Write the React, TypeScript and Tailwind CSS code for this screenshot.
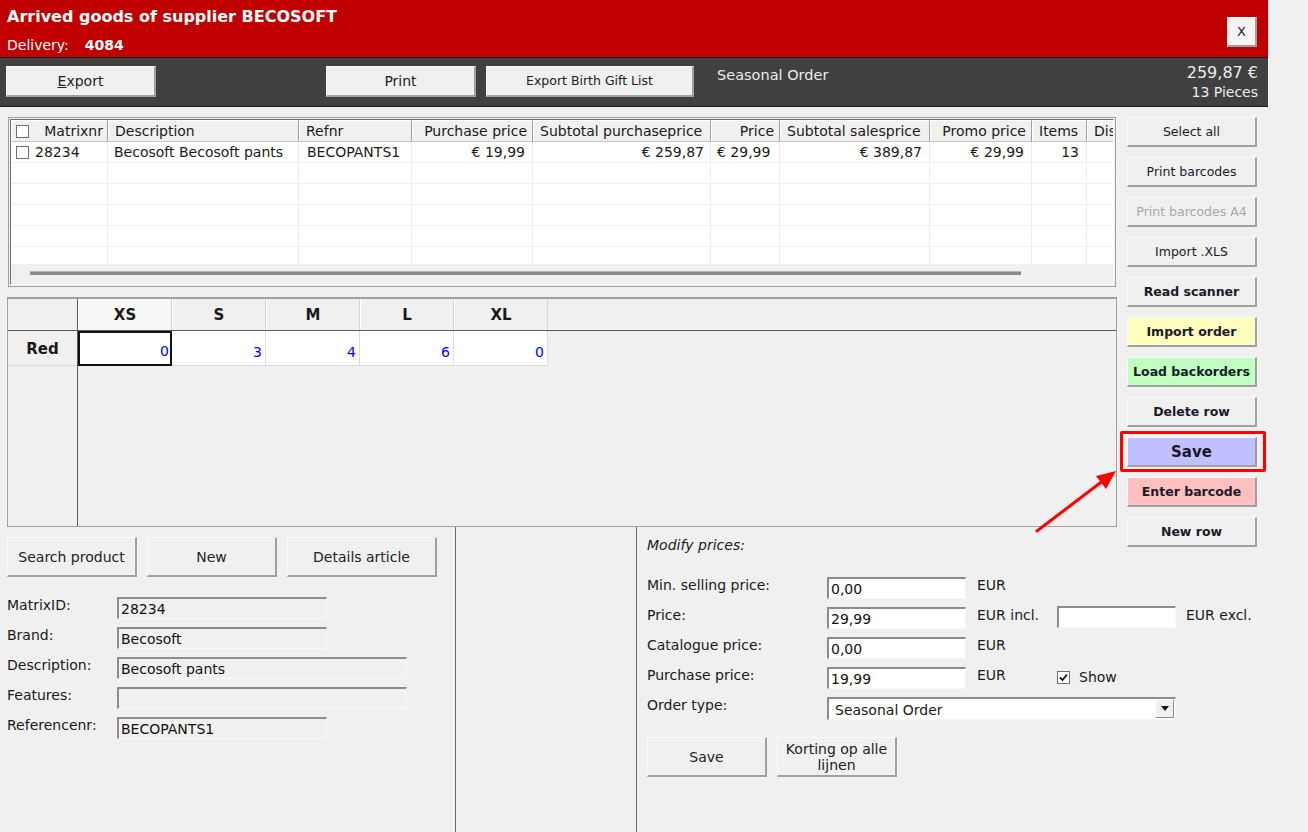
import React from "react";

type BtnProps = {
  children: React.ReactNode;
  className?: string;
};

// classic raised windows button
const Btn: React.FC<BtnProps> = ({ children, className = "" }) => (
  <button
    className={`flex items-center justify-center shrink-0 border-t border-l border-t-[#fbfbfb] border-l-[#fbfbfb] border-r-2 border-b-2 border-r-[#a0a0a0] border-b-[#a0a0a0] leading-[16px] ${className}`}
  >
    {children}
  </button>
);

const Field: React.FC<{ value?: string; className?: string }> = ({ value = "", className = "" }) => (
  <div
    className={`h-[22px] shrink-0 border-t-2 border-l-2 border-t-[#8c8c8c] border-l-[#8c8c8c] border-r border-b border-r-[#f8f8f8] border-b-[#f8f8f8] px-[2px] pt-[2px] text-[14px] leading-[17px] text-[#111] ${className}`}
  >
    {value}
  </div>
);

interface Col {
  label: string;
  w: string;
  head: "left" | "right";
}

const columns: Col[] = [
  { label: "Matrixnr", w: "w-[97px]", head: "right" },
  { label: "Description", w: "w-[191px]", head: "left" },
  { label: "Refnr", w: "w-[113px]", head: "left" },
  { label: "Purchase price", w: "w-[121px]", head: "right" },
  { label: "Subtotal purchaseprice", w: "w-[178px]", head: "left" },
  { label: "Price", w: "w-[69px]", head: "right" },
  { label: "Subtotal salesprice", w: "w-[150px]", head: "left" },
  { label: "Promo price", w: "w-[102px]", head: "right" },
  { label: "Items", w: "w-[55px]", head: "left" },
  { label: "Dis", w: "w-[40px]", head: "left" },
];

const sizes = [
  { size: "XS", qty: "0" },
  { size: "S", qty: "3" },
  { size: "M", qty: "4" },
  { size: "L", qty: "6" },
  { size: "XL", qty: "0" },
];

const Checkbox: React.FC<{ checked?: boolean }> = ({ checked }) => (
  <div className="w-[13px] h-[13px] shrink-0 bg-white border border-[#707070] flex items-center justify-center">
    {checked && (
      <svg width="9" height="9" viewBox="0 0 9 9">
        <path d="M1 4.5 L3.5 7 L8 1.5" stroke="#111" strokeWidth="1.8" fill="none" />
      </svg>
    )}
  </div>
);

export default function App() {
  const rightButtons = [
    { label: "Select all", cls: "bg-[#f0f0f0] text-[#1a1a2a] text-[12.5px]" },
    { label: "Print barcodes", cls: "bg-[#f0f0f0] text-[#1a1a2a] text-[12.5px]" },
    { label: "Print barcodes A4", cls: "bg-[#f0f0f0] text-[#a8a8a8] text-[12.5px]" },
    { label: "Import .XLS", cls: "bg-[#f0f0f0] text-[#1a1a2a] text-[12.5px]" },
    { label: "Read scanner", cls: "bg-[#f0f0f0] text-[#1a1a2a] text-[12.5px] font-bold" },
    { label: "Import order", cls: "bg-[#ffffc0] text-[#1a1a2a] text-[12.5px] font-bold" },
    { label: "Load backorders", cls: "bg-[#c0ffc0] text-[#1a1a2a] text-[12.5px] font-bold" },
    { label: "Delete row", cls: "bg-[#f0f0f0] text-[#1a1a2a] text-[12.5px] font-bold" },
    { label: "Save", cls: "bg-[#c0c0ff] text-[#1a1a2a] text-[15px] font-bold" },
    { label: "Enter barcode", cls: "bg-[#ffc0c0] text-[#1a1a2a] text-[12.5px] font-bold" },
    { label: "New row", cls: "bg-[#f0f0f0] text-[#1a1a2a] text-[12.5px] font-bold" },
  ];

  const cellText = (r: number, i: number) => {
    if (r !== 0) return null;
    switch (i) {
      case 0:
        return (
          <div className="flex items-center gap-[6px] pl-[5px]">
            <Checkbox />
            <span>28234</span>
          </div>
        );
      case 1:
        return <span className="pl-[6px]">Becosoft Becosoft pants</span>;
      case 2:
        return <span className="pl-[8px]">BECOPANTS1</span>;
      case 3:
        return <span className="ml-auto pr-[7px]">€ 19,99</span>;
      case 4:
        return <span className="ml-auto pr-[6px]">€ 259,87</span>;
      case 5:
        return <span className="pl-[6px]">€ 29,99</span>;
      case 6:
        return <span className="ml-auto pr-[7px]">€ 389,87</span>;
      case 7:
        return <span className="ml-auto pr-[7px]">€ 29,99</span>;
      case 8:
        return <span className="ml-auto pr-[7px]">13</span>;
      default:
        return null;
    }
  };

  return (
    <div className="relative w-[1308px] h-[832px] overflow-hidden bg-[#f0f0f0] font-['DejaVu_Sans',sans-serif] text-[14px] text-[#1a1a1a]">
      <div className="w-[1268px] h-full flex flex-col">
        {/* Red title bar */}
        <div className="h-[57px] shrink-0 bg-[#c00000] flex justify-between pl-[7px] pr-[11px]">
          <div className="flex flex-col pt-[7px]">
            <div className="text-[16px] font-bold text-white leading-[20px]">
              Arrived goods of supplier BECOSOFT
            </div>
            <div className="mt-[9px] flex gap-[16px] text-[14px] leading-[18px] text-white">
              <span>Delivery:</span>
              <span className="font-bold">4084</span>
            </div>
          </div>
          <div className="pt-[17px]">
            <Btn className="w-[30px] h-[30px] bg-[#f4f4f4] text-[13px] text-[#222]">X</Btn>
          </div>
        </div>

        {/* Dark toolbar */}
        <div className="h-[50px] shrink-0 bg-[#404040] border-t border-b border-[#1c1c1c] flex items-start pl-[6px] pr-[10px] pt-[8px]">
          <Btn className="w-[150px] h-[31px] bg-[#f0f0f0] text-[14px] text-[#222]">
            <span className="underline">E</span>xport
          </Btn>
          <Btn className="ml-[170px] w-[150px] h-[31px] bg-[#f0f0f0] text-[14px] text-[#222]">Print</Btn>
          <Btn className="ml-[10px] w-[208px] h-[31px] bg-[#f0f0f0] text-[12.5px] text-[#222]">
            Export Birth Gift List
          </Btn>
          <div className="ml-[23px] pt-[1px] text-[14.5px] leading-[16px] text-[#ececec]">Seasonal Order</div>
          <div className="ml-auto flex flex-col items-end text-[#ececec]">
            <div className="text-[16px] leading-[19px] -mt-[3px]">259,87 €</div>
            <div className="text-[14px] leading-[16px] mt-[2px]">13 Pieces</div>
          </div>
        </div>

        {/* Upper section: table, size grid, buttons */}
        <div className="h-[420px] shrink-0 flex items-start pt-[10px] pl-[7px]">
          <div className="w-[1110px] flex flex-col">
            {/* Article table */}
            <div className="ml-[1px] w-[1108px] h-[170px] border border-[#a0a0a0] p-[1px]">
              <div className="h-full border border-t-[#707070] border-l-[#707070] border-r-white border-b-white overflow-hidden flex flex-col">
                <div className="flex h-[22px] shrink-0 bg-[#f0f0f0]">
                  {columns.map((c, i) =>
                    i === 0 ? (
                      <div
                        key={c.label}
                        className={`${c.w} shrink-0 h-full border-r border-b border-r-[#a0a0a0] border-b-[#c8c8c8] border-t border-l border-t-white border-l-white flex items-center pl-[4px] pr-[4px] whitespace-nowrap`}
                      >
                        <Checkbox />
                        <span className="ml-auto">{c.label}</span>
                      </div>
                    ) : (
                      <div
                        key={c.label}
                        className={`${c.w} shrink-0 h-full border-r border-b border-r-[#a0a0a0] border-b-[#c8c8c8] border-t border-l border-t-white border-l-white flex items-center whitespace-nowrap overflow-hidden ${
                          c.head === "right" ? "justify-end pr-[5px]" : "pl-[6px]"
                        }`}
                      >
                        {c.label}
                      </div>
                    )
                  )}
                </div>
                <div className="h-[122px] shrink-0 overflow-hidden bg-white">
                  {[0, 1, 2, 3, 4, 5].map((r) => (
                    <div key={r} className="flex h-[21px] border-b border-[#f0f0f0]">
                      {columns.map((c, i) => (
                        <div
                          key={c.label}
                          className={`${c.w} shrink-0 h-full border-r border-[#ececec] flex items-center whitespace-nowrap`}
                        >
                          {cellText(r, i)}
                        </div>
                      ))}
                    </div>
                  ))}
                </div>
                <div className="flex-1 pt-[7px] pl-[19px]">
                  <div className="w-[991px] h-[4px] bg-[#8a8a8a] border-t border-[#b8b8b8]" />
                </div>
              </div>
            </div>

            {/* Size grid */}
            <div className="mt-[10px] w-[1110px] h-[230px] border border-[#a0a0a0] border-t-2 flex flex-col overflow-hidden">
              <div className="flex h-[32px] shrink-0 border-b border-[#5a5a5a] bg-[#f0f0f0]">
                <div className="w-[70px] shrink-0 border-r border-[#5a5a5a]" />
                {sizes.map((s, i) => (
                  <div
                    key={s.size}
                    className={`w-[94px] shrink-0 flex items-center justify-center pt-[1px] font-bold text-[15px] border-r border-[#d4d4d4] border-l border-l-white ${
                      i === 0 ? "bg-[#f8f8f8]" : ""
                    }`}
                  >
                    {s.size}
                  </div>
                ))}
              </div>
              <div className="flex flex-1">
                <div className="w-[70px] shrink-0 border-r border-[#5a5a5a]">
                  <div className="h-[35px] flex items-center justify-center pt-[2px] font-bold text-[15px] bg-[#f0f0f0] border-b border-[#d8d8d8]">
                    Red
                  </div>
                </div>
                <div className="flex items-start">
                  {sizes.map((s, i) => (
                    <div
                      key={s.size}
                      className={`w-[94px] h-[35px] shrink-0 bg-white flex items-end justify-end pb-[2px] text-[14px] text-[#0000ff] ${
                        i === 0
                          ? "border-2 border-[#111] pr-[1px]"
                          : "border-r border-b border-[#dcdcdc] pr-[3px]"
                      }`}
                    >
                      {s.qty}
                    </div>
                  ))}
                </div>
              </div>
            </div>
          </div>

          {/* Right action buttons */}
          <div className="ml-[10px] flex flex-col gap-[10px]">
            {rightButtons.map((b) => (
              <Btn key={b.label} className={`w-[130px] h-[30px] ${b.cls}`}>
                {b.label}
              </Btn>
            ))}
          </div>
        </div>

        {/* Lower section */}
        <div className="flex flex-1">
          {/* Article details */}
          <div className="w-[456px] shrink-0 border-r border-[#6a6a6a] pl-[7px] pt-[10px]">
            <div className="flex gap-[10px] text-[14px] text-[#222]">
              <Btn className="w-[130px] h-[40px] bg-[#f0f0f0]">Search product</Btn>
              <Btn className="w-[130px] h-[40px] bg-[#f0f0f0]">New</Btn>
              <Btn className="w-[150px] h-[40px] bg-[#f0f0f0]">Details article</Btn>
            </div>
            <div className="mt-[20px] flex flex-col gap-[8px]">
              {[
                { l: "MatrixID:", v: "28234", w: "w-[210px]" },
                { l: "Brand:", v: "Becosoft", w: "w-[210px]" },
                { l: "Description:", v: "Becosoft pants", w: "w-[290px]" },
                { l: "Features:", v: "", w: "w-[290px]" },
                { l: "Referencenr:", v: "BECOPANTS1", w: "w-[210px]" },
              ].map((f) => (
                <div key={f.l} className="flex items-start">
                  <div className="w-[110px] shrink-0 leading-[16px]">{f.l}</div>
                  <Field value={f.v} className={`${f.w} bg-[#f0f0f0]`} />
                </div>
              ))}
            </div>
          </div>

          {/* Empty middle panel */}
          <div className="w-[181px] shrink-0 border-r border-[#6a6a6a]" />

          {/* Modify prices */}
          <div className="flex-1 pl-[10px] pt-[10px]">
            <div className="italic leading-[16px]">Modify prices:</div>
            <div className="mt-[24px] flex flex-col gap-[8px]">
              <div className="flex items-start">
                <div className="w-[180px] shrink-0 leading-[16px]">Min. selling price:</div>
                <Field value="0,00" className="w-[139px] bg-white" />
                <div className="ml-[11px] w-[80px] leading-[16px]">EUR</div>
              </div>
              <div className="flex items-start">
                <div className="w-[180px] shrink-0 leading-[16px]">Price:</div>
                <Field value="29,99" className="w-[139px] bg-white" />
                <div className="ml-[11px] w-[80px] leading-[16px]">EUR incl.</div>
                <Field className="w-[119px] bg-white -mt-[1px]" />
                <div className="ml-[10px] leading-[16px]">EUR excl.</div>
              </div>
              <div className="flex items-start">
                <div className="w-[180px] shrink-0 leading-[16px]">Catalogue price:</div>
                <Field value="0,00" className="w-[139px] bg-white" />
                <div className="ml-[11px] w-[80px] leading-[16px]">EUR</div>
              </div>
              <div className="flex items-start">
                <div className="w-[180px] shrink-0 leading-[16px]">Purchase price:</div>
                <Field value="19,99" className="w-[139px] bg-white" />
                <div className="ml-[11px] w-[80px] leading-[16px]">EUR</div>
                <div className="flex items-center gap-[9px] pt-[2px]">
                  <Checkbox checked />
                  <span className="leading-[16px]">Show</span>
                </div>
              </div>
              <div className="flex items-start">
                <div className="w-[180px] shrink-0 leading-[16px]">Order type:</div>
                <div className="w-[349px] h-[23px] bg-white border-t-2 border-l-2 border-t-[#8c8c8c] border-l-[#8c8c8c] border-r border-b border-[#f8f8f8] flex items-center justify-between pl-[6px] pr-[1px]">
                  <span className="leading-[16px] pt-[2px]">Seasonal Order</span>
                  <div className="w-[18px] h-[18px] bg-[#f0f0f0] border-r border-b border-[#8c8c8c] flex items-center justify-center">
                    <svg width="8" height="5" viewBox="0 0 8 5">
                      <path d="M0 0 H8 L4 5 Z" fill="#111" />
                    </svg>
                  </div>
                </div>
              </div>
            </div>
            <div className="mt-[17px] flex gap-[10px] text-[14px] text-[#222]">
              <Btn className="w-[120px] h-[40px] bg-[#f0f0f0]">Save</Btn>
              <Btn className="w-[120px] h-[40px] bg-[#f0f0f0] text-center">
                Korting op alle
                <br />
                lijnen
              </Btn>
            </div>
          </div>
        </div>
      </div>

      {/* Annotation: highlight box and arrow */}
      <div className="absolute left-[1120px] top-[431px] w-[146px] h-[41px] border-[3px] border-[#ff0000] rounded-[2px] pointer-events-none" />
      <svg className="absolute left-0 top-0 pointer-events-none" width="1308" height="832">
        <line x1="1037" y1="531" x2="1104" y2="480" stroke="#ff0000" strokeWidth="3" strokeLinecap="round" />
        <path d="M1116 471 L1096 476 L1106 489 Z" fill="#ff0000" />
      </svg>
    </div>
  );
}
